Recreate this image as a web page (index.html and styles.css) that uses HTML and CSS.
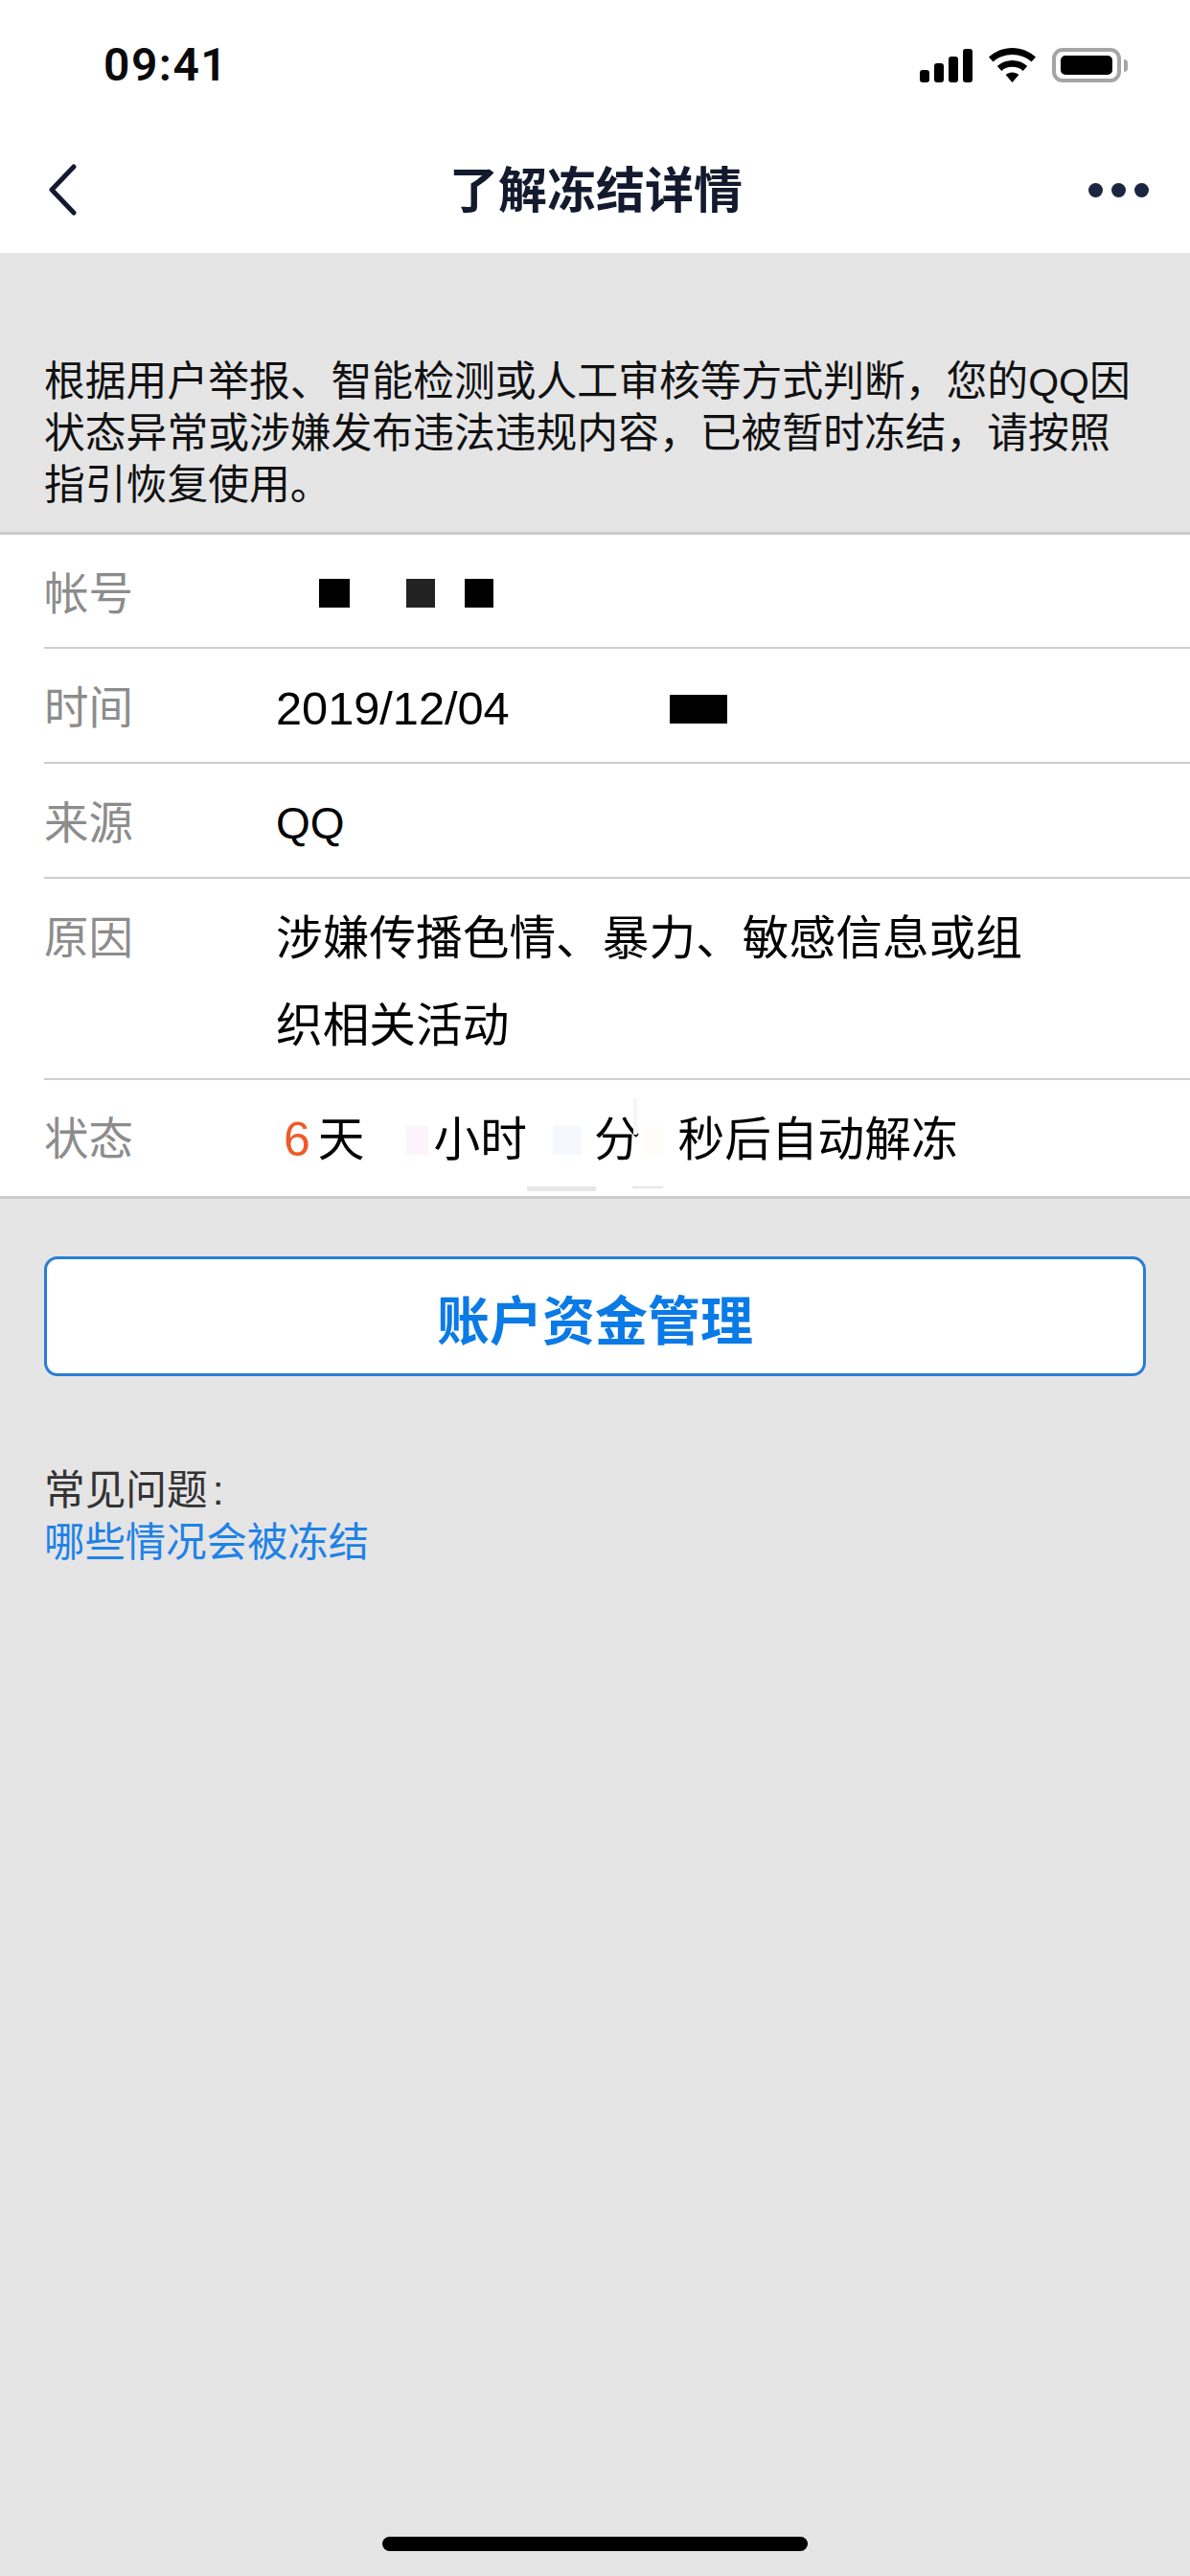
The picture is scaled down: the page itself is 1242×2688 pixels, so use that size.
FILE: index.html
```html
<!DOCTYPE html>
<html lang="zh-CN">
<head>
<meta charset="UTF-8">
<meta name="viewport" content="width=device-width, initial-scale=1.0">
<title>了解冻结详情</title>
<link rel="stylesheet" href="styles.css">
</head>
<body>
  <div class="top-bar">
    <div class="status-bar">
      <span class="clock">09:41</span>
      <div class="status-icons">
        <svg class="icon-signal" width="55" height="35" viewBox="0 0 55 35">
          <rect x="0" y="22" width="10" height="13" rx="3"/>
          <rect x="15" y="15" width="10" height="20" rx="3"/>
          <rect x="30" y="8" width="10" height="27" rx="3"/>
          <rect x="45" y="0" width="10" height="35" rx="3"/>
        </svg>
        <svg class="icon-wifi" width="49" height="36" viewBox="0 0 49 36">
          <path d="M24.5 0C15 0 6.600 3.700 0 9.500L4.500 14.500C9.800 9.800 16.800 7 24.500 7C32.200 7 39.200 9.800 44.500 14.500L49 9.500C42.400 3.700 34 0 24.500 0Z"/>
          <path d="M24.500 13C18.500 13 13 15.200 8.800 18.900L13.300 23.900C16.300 21.300 20.200 19.800 24.500 19.800C28.800 19.800 32.700 21.300 35.700 23.900L40.200 18.900C36 15.200 30.500 13 24.500 13Z"/>
          <path d="M24.500 25.500C22 25.500 19.500 26.400 17.600 28L24.500 36L31.400 28C29.500 26.400 27 25.500 24.500 25.500Z"/>
        </svg>
        <div class="battery"><div class="battery-fill"></div></div>
        <div class="battery-nub"></div>
      </div>
    </div>
    <div class="nav-bar">
      <svg class="nav-back" width="30" height="54" viewBox="0 0 30 54">
        <path d="M27 3L4 27L27 51" fill="none" stroke="#141a2e" stroke-width="5" stroke-linecap="round" stroke-linejoin="round"/>
      </svg>
      <h1 class="nav-title">了解冻结详情</h1>
      <div class="nav-more">
        <span class="dot"></span>
        <span class="dot"></span>
        <span class="dot"></span>
      </div>
    </div>
  </div>

  <div class="intro">
    <div>根据用户举报、智能检测或人工审核等方式判断，您的<span class="qq">QQ</span>因</div>
    <div>状态异常或涉嫌发布违法违规内容，已被暂时冻结，请按照</div>
    <div>指引恢复使用。</div>
  </div>

  <div class="info-list">
    <div class="info-row">
      <span class="info-label">帐号</span>
      <div class="info-value">
        <span class="mask mask-a"></span>
        <span class="mask mask-b"></span>
        <span class="mask mask-c"></span>
      </div>
    </div>
    <div class="info-row">
      <span class="info-label">时间</span>
      <div class="info-value">
        2019/12/04
        <span class="mask mask-time"></span>
      </div>
    </div>
    <div class="info-row">
      <span class="info-label">来源</span>
      <div class="info-value info-qq">QQ</div>
    </div>
    <div class="info-row info-row-reason">
      <span class="info-label">原因</span>
      <div class="info-value info-reason">涉嫌传播色情、暴力、敏感信息或组织相关活动</div>
    </div>
    <div class="info-row">
      <span class="info-label">状态</span>
      <div class="info-value countdown">
        <span class="count-days">6</span>
        <span>天</span>
        <span class="smudge smudge-pink"></span>
        <span>小时</span>
        <span class="smudge smudge-blue"></span>
        <span>分</span>
        <span class="smudge smudge-cream"></span>
        <span>秒后自动解冻</span>
        <span class="scrap scrap-wide"></span>
        <span class="scrap scrap-thin"></span>
        <span class="scrap scrap-line"></span>
      </div>
    </div>
  </div>

  <button class="fund-button" type="button">账户资金管理</button>

  <div class="faq">
    <div class="faq-title">常见问题<span class="faq-colon">:</span></div>
    <a class="faq-link" href="#">哪些情况会被冻结</a>
  </div>

  <div class="home-bar"></div>
</body>
</html>
```

FILE: styles.css
```css
* {
  box-sizing: border-box;
}
html,
body {
  margin: 0;
  padding: 0;
}
body {
  width: 1242px;
  height: 2688px;
  display: flex;
  flex-direction: column;
  background-color: #e5e5e6;
  font-family: "Liberation Sans", "Noto Sans CJK SC", sans-serif;
  color: #000;
  overflow: hidden;
}

/* top */
.top-bar {
  height: 264px;
  background-color: #fff;
}
.status-bar {
  height: 136px;
  padding: 44px 65px 0 108px;
  display: flex;
  justify-content: space-between;
  align-items: flex-start;
}
.clock {
  font-family: Roboto, sans-serif;
  font-size: 48px;
  line-height: 48px;
  font-weight: 600;
  letter-spacing: 1.5px;
  color: #0a0a0a;
}
.status-icons {
  display: flex;
  align-items: flex-start;
  padding-top: 6px;
}
.icon-signal {
  margin-top: 1px;
  margin-right: 17px;
}
.icon-wifi {
  margin-right: 17px;
}
.battery {
  width: 72px;
  height: 36px;
  padding: 4px 5px;
  border: 4px solid #a5a5a5;
  border-radius: 11px;
}
.battery-fill {
  height: 100%;
  background-color: #000;
  border-radius: 5px;
}
.battery-nub {
  width: 4px;
  height: 13px;
  margin: 12px 0 0 3px;
  background-color: #a5a5a5;
  border-radius: 0 4px 4px 0;
}
.nav-bar {
  height: 128px;
  padding: 0 43px 4px 50px;
  display: flex;
  align-items: center;
}
.nav-back {
  width: 30px;
}
.nav-title {
  flex: 1;
  margin: 4px 0 0 28px;
  font-size: 51px;
  line-height: 60px;
  font-weight: 600;
  text-align: center;
  color: #141a2e;
}
.nav-more {
  display: flex;
  gap: 9px;
}
.dot {
  width: 15px;
  height: 15px;
  background-color: #1c2540;
  border-radius: 50%;
}

/* intro */
.intro {
  height: 291px;
  padding: 107px 46px 0;
  font-size: 42.8px;
  line-height: 54px;
  color: #111;
}
.qq {
  font-size: 41px;
  line-height: 1;
}

/* list */
.info-list {
  padding-left: 46px;
  background-color: #fff;
  border-top: 3px solid #cbcbcb;
  border-bottom: 3px solid #cbcbcb;
}
.info-row {
  padding: 17px 0 10px;
  display: grid;
  grid-template-columns: 242px 1fr;
  border-bottom: 2px solid #cecece;
}
.info-row:first-child,
.info-row-reason {
  padding-bottom: 9px;
}
.info-row:last-child {
  padding-bottom: 13px;
  border-bottom: none;
}
.info-label {
  font-size: 46.5px;
  line-height: 91px;
  color: #8c8c8c;
}
.info-value {
  display: flex;
  align-items: center;
  min-height: 91px;
  font-size: 48.7px;
  line-height: 91px;
}
.info-qq {
  font-size: 46px;
}
.info-reason {
  display: block;
  width: 790px;
}
.mask {
  height: 30px;
  background-color: #000;
}
.mask-a,
.mask-b,
.mask-c {
  margin-bottom: 3px;
}
.mask-a {
  width: 32px;
  margin-left: 45px;
}
.mask-b {
  width: 30px;
  margin-left: 59px;
  background-color: #222;
}
.mask-c {
  width: 30px;
  margin-left: 31px;
}
.mask-time {
  width: 60px;
  margin-left: 167px;
}

/* countdown */
.countdown {
  position: relative;
}
.count-days {
  margin-left: 8px;
  margin-right: 8px;
  font-size: 50px;
  color: #f05a28;
}
.smudge {
  width: 30px;
  height: 30px;
}
.smudge-pink {
  width: 23px;
  margin: 0 6px 0 43px;
  background-color: #fdf3fb;
}
.smudge-blue {
  margin: 0 13px 0 27px;
  background-color: #f5f9fe;
}
.smudge-cream {
  width: 22px;
  margin: 0 15px 0 2px;
  background-color: #fffdf8;
}
.scrap {
  position: absolute;
  background-color: #e6e6e8;
}
.scrap-wide {
  left: 262px;
  top: 94px;
  width: 72px;
  height: 5px;
}
.scrap-thin {
  left: 372px;
  top: 94px;
  width: 32px;
  height: 2px;
}
.scrap-line {
  left: 373px;
  top: 2px;
  width: 4px;
  height: 38px;
  background-color: #f5f5f7;
}

/* button */
.fund-button {
  display: block;
  width: 1150px;
  height: 125px;
  margin: 60px 46px 0;
  background-color: #fff;
  border: 3px solid #2a7dd6;
  border-radius: 14px;
  font-family: inherit;
  font-size: 55px;
  font-weight: 600;
  color: #0a7ae6;
}

/* faq */
.faq {
  margin-top: 92px;
  padding-left: 46px;
  font-size: 42.7px;
  line-height: 54px;
}
.faq-title {
  color: #333;
}
.faq-colon {
  margin-left: 5px;
}
.faq-link {
  font-size: 42.4px;
  color: #1e82e6;
  text-decoration: none;
}

/* bottom */
.home-bar {
  width: 444px;
  height: 15px;
  margin: auto auto 26px;
  background-color: #000;
  border-radius: 8px;
}
```
